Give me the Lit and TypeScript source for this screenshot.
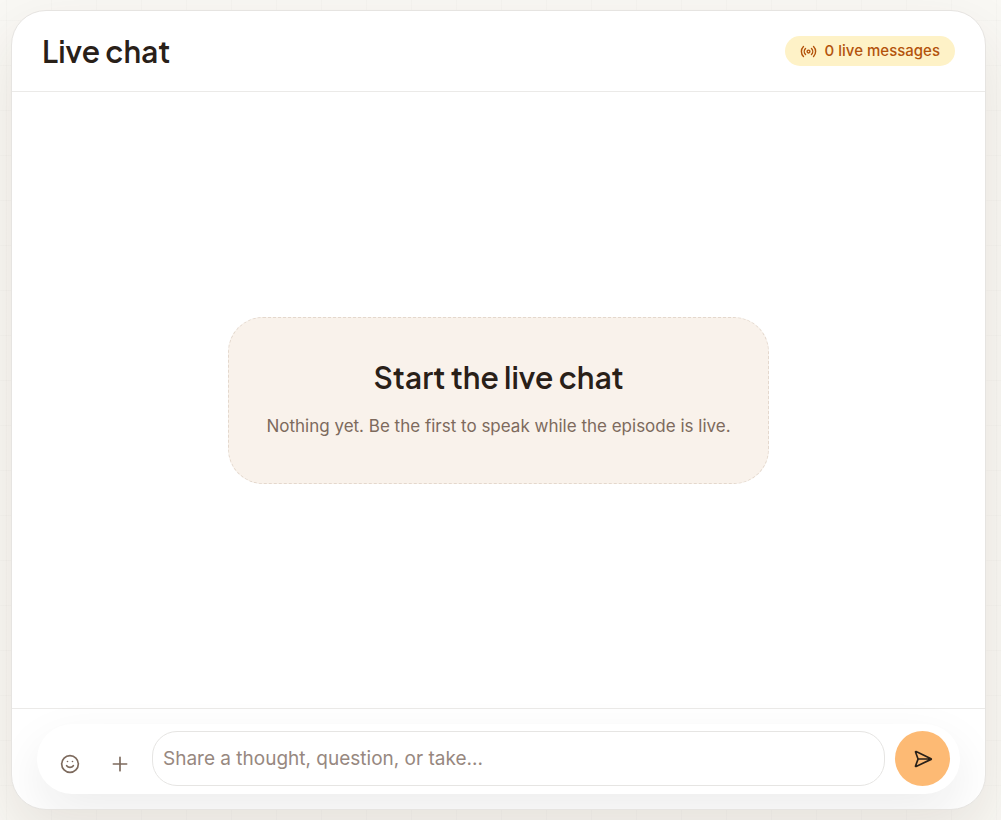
import { LitElement, html, css } from "lit";
import { customElement, property, state } from "lit/decorators.js";

@customElement("live-badge")
class LiveBadge extends LitElement {
  @property({ type: Number }) count = 0;

  static styles = css`
    .badge {
      display: flex;
      align-items: center;
      gap: 8px;
      height: 30px;
      padding: 0 15px;
      border-radius: 15px;
      background: #fef2c7;
      color: #b3530c;
      font: 500 15px/20px Inter, sans-serif;
      white-space: nowrap;
    }
    .icon {
      width: 17px;
      height: 17px;
      fill: none;
      stroke: currentColor;
      stroke-width: 2;
      stroke-linecap: round;
      stroke-linejoin: round;
    }
  `;

  render() {
    return html`<div class="badge">
      <svg class="icon" viewBox="0 0 24 24" aria-hidden="true">
        <path d="M4.9 19.1C1 15.2 1 8.8 4.9 4.9" />
        <path d="M7.8 16.2c-2.3-2.3-2.3-6.1 0-8.5" />
        <circle cx="12" cy="12" r="2" />
        <path d="M16.2 7.8c2.3 2.3 2.3 6.1 0 8.5" />
        <path d="M19.1 4.9C23 8.8 23 15.1 19.1 19" />
      </svg>
      <span>${this.count} live messages</span>
    </div>`;
  }
}

@customElement("chat-composer")
class ChatComposer extends LitElement {
  @state() private draft = "";

  static styles = css`
    .composer {
      display: flex;
      align-items: flex-end;
      padding: 7px 10px 8px;
      border-radius: 35px;
      background: #ffffff;
      box-shadow: 0 20px 50px rgba(28, 25, 23, 0.08);
    }
    button {
      display: grid;
      place-items: center;
      flex: none;
      padding: 0;
      border: 0;
      border-radius: 50%;
      cursor: pointer;
    }
    .tool {
      width: 45px;
      height: 45px;
      margin-right: 5px;
      background: transparent;
      color: #7d6a5d;
    }
    .send {
      width: 55px;
      height: 55px;
      background: #fdba74;
      color: #292018;
    }
    .message {
      flex: 1;
      min-width: 0;
      box-sizing: border-box;
      height: 55px;
      margin: 0 10px 0 5px;
      padding: 0 10px;
      border: 1px solid #e6e5e3;
      border-radius: 25px;
      background: #ffffff;
      color: #292018;
      font: 400 19px/28px Inter, sans-serif;
      outline: none;
    }
    .message::placeholder {
      color: #978880;
      opacity: 1;
    }
    .icon {
      width: 20px;
      height: 20px;
      fill: none;
      stroke: currentColor;
      stroke-width: 2;
      stroke-linecap: round;
      stroke-linejoin: round;
    }
  `;

  private submit(e: Event) {
    e.preventDefault();
    this.draft = "";
  }

  render() {
    return html`<form class="composer" @submit=${this.submit}>
      <button class="tool" type="button" aria-label="Add emoji">
        <svg class="icon" viewBox="0 0 24 24">
          <circle cx="12" cy="12" r="10" />
          <path d="M8 14s1.5 2 4 2 4-2 4-2M9 9h.01M15 9h.01" />
        </svg>
      </button>
      <button class="tool" type="button" aria-label="Add attachment">
        <svg class="icon" viewBox="0 0 24 24"><path d="M4 12h16M12 4v16" /></svg>
      </button>
      <input
        class="message"
        type="text"
        aria-label="Message"
        placeholder="Share a thought, question, or take..."
        .value=${this.draft}
        @input=${(e: InputEvent) => (this.draft = (e.target as HTMLInputElement).value)}
      />
      <button class="send" type="submit" aria-label="Send message">
        <svg class="icon" viewBox="0 0 24 24">
          <path d="M3.7 3.05a.5.5 0 0 0-.68.63l2.84 7.62a2 2 0 0 1 0 1.4l-2.84 7.62a.5.5 0 0 0 .68.63l18-8.5a.5.5 0 0 0 0-.9zM6 12h16" />
        </svg>
      </button>
    </form>`;
  }
}

@customElement("app-root")
class AppRoot extends LitElement {
  @state() private count = 0;

  static styles = css`
    :host {
      display: flex;
      box-sizing: border-box;
      min-height: 100vh;
      padding: 10px 15px 10px 11px;
      overflow: hidden;
      background-color: #f9f8f4;
      background-image: linear-gradient(90deg, rgba(28, 25, 23, 0.015) 1px, transparent 1px),
        linear-gradient(rgba(28, 25, 23, 0.015) 1px, transparent 1px);
      background-size: 45px 45px;
      background-position: 6px 20px;
      font-family: Inter, sans-serif;
      color: #292018;
    }
    .card {
      flex: 1;
      display: flex;
      flex-direction: column;
      min-width: 0;
      border: 1px solid #e6e4e1;
      border-radius: 35px;
      background: #ffffff;
      overflow: hidden;
      box-shadow: 0 25px 60px rgba(68, 44, 20, 0.1);
    }
    .header {
      display: flex;
      align-items: center;
      justify-content: space-between;
      height: 80px;
      padding: 0 30px;
      border-bottom: 1px solid #ebeae8;
    }
    .title {
      margin: 0;
      font: 600 30px/40px "Plus Jakarta Sans", Inter, sans-serif;
    }
    .feed {
      flex: 1;
      display: grid;
      place-items: center;
    }
    .empty {
      padding: 39px 37px 41px;
      border: 1px dashed #e4d8cd;
      border-radius: 35px;
      background: #f9f2eb;
      text-align: center;
    }
    .hint {
      margin: 14px 0 0;
      color: #7d6a5d;
      font: 400 17px/31px Inter, sans-serif;
    }
    .footer {
      padding: 15px 25px;
      border-top: 1px solid #ebeae8;
    }
  `;

  render() {
    return html`<section class="card">
      <header class="header">
        <h1 class="title">Live chat</h1>
        <live-badge .count=${this.count}></live-badge>
      </header>
      <main class="feed">
        <div class="empty">
          <h2 class="title">Start the live chat</h2>
          <p class="hint">Nothing yet. Be the first to speak while the episode is live.</p>
        </div>
      </main>
      <footer class="footer"><chat-composer></chat-composer></footer>
    </section>`;
  }
}
